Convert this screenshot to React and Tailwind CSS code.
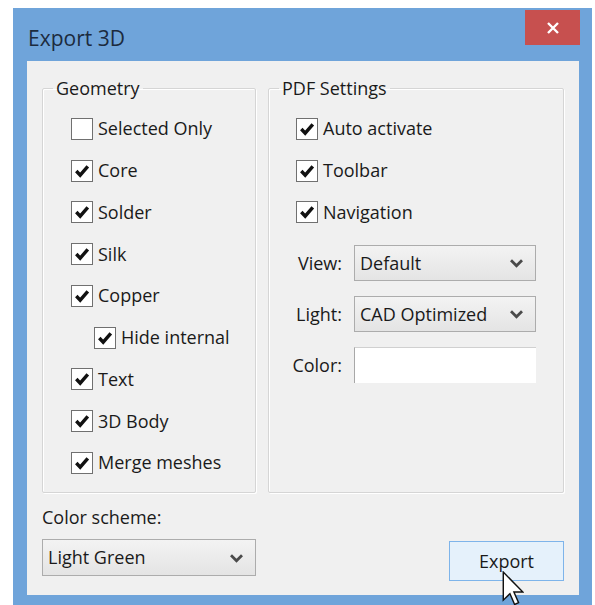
import React from 'react'

const geometry = [
  { label: 'Selected Only', checked: false },
  { label: 'Core', checked: true },
  { label: 'Solder', checked: true },
  { label: 'Silk', checked: true },
  { label: 'Copper', checked: true },
  { label: 'Hide internal', checked: true, nested: true },
  { label: 'Text', checked: true },
  { label: '3D Body', checked: true },
  { label: 'Merge meshes', checked: true },
]

const pdfOptions = ['Auto activate', 'Toolbar', 'Navigation']

function CheckBox({ checked }) {
  return (
    <span className="w-[22px] h-[22px] shrink-0 border-[1.5px] border-[#707070] bg-white flex items-center justify-center">
      {checked && (
        <svg width="16" height="16" viewBox="0 0 16 16">
          <path d="M2.3 8 L6.2 12.2 L13.8 3.3" fill="none" stroke="#111" strokeWidth="3.4" strokeLinejoin="miter" />
        </svg>
      )}
    </span>
  )
}

function CheckRow({ label, checked, nested }) {
  return (
    <div className={`h-[41.75px] flex items-center gap-[5px] ${nested ? 'pl-[23px]' : ''}`}>
      <CheckBox checked={checked} />
      <span>{label}</span>
    </div>
  )
}

function Chevron() {
  return (
    <svg width="15" height="10" viewBox="0 0 15 10" className="shrink-0">
      <path d="M2 2.3 L7.5 7.8 L13 2.3" fill="none" stroke="#4a4a4a" strokeWidth="2.8" />
    </svg>
  )
}

function Dropdown({ value, className }) {
  return (
    <div className={`border border-[#acacac] bg-gradient-to-b from-[#f3f3f3] to-[#e4e4e4] flex items-center pl-[5px] pr-[11px] ${className}`}>
      <span className="flex-1">{value}</span>
      <Chevron />
    </div>
  )
}

function Group({ title, className, children }) {
  return (
    <fieldset className={`border border-[#d5d5d5] shadow-[inset_1px_1px_0_#fff,1px_1px_0_#fff] rounded-[2px] ${className}`}>
      <legend className="ml-[10px] px-[3px] leading-[24px]">{title}</legend>
      {children}
    </fieldset>
  )
}

function FieldRow({ label, children }) {
  return (
    <div className="flex items-center gap-[12px]">
      <span className="w-[73px] text-right">{label}</span>
      {children}
    </div>
  )
}

export default function App() {
  return (
    <div className="relative w-[595px] h-[605px] bg-white pl-[13px] pt-[8px] overflow-hidden font-['Open_Sans',sans-serif] text-[18px] text-[#1a1a1a]">
      <div className="w-[579px] h-[597px] bg-[#6fa4da] flex flex-col">
        {/* title bar */}
        <div className="h-[53px] flex items-start pl-[15px] pr-[12px]">
          <span className="mt-[16px] text-[21px] leading-[28px] text-[#1c2b3e]">Export 3D</span>
          <button className="ml-auto mt-[2px] w-[55px] h-[35px] bg-[#c7504f] flex items-center justify-center">
            <svg width="14" height="14" viewBox="0 0 14 14">
              <path d="M2 2 L12 12 M12 2 L2 12" stroke="#fff" strokeWidth="2.4" />
            </svg>
          </button>
        </div>

        {/* client area */}
        <div className="ml-[14px] w-[552px] h-[534px] bg-[#f0f0f0] px-[15px]">
          <div className="flex gap-[12px] mt-[15px]">
            <Group title="Geometry" className="w-[214px] h-[417px]">
              <div className="pl-[28px] pt-[8px]">
                {geometry.map((g) => (
                  <CheckRow key={g.label} {...g} />
                ))}
              </div>
            </Group>

            <Group title="PDF Settings" className="w-[296px] h-[417px]">
              <div className="pl-[27px] pt-[8px]">
                {pdfOptions.map((o) => (
                  <CheckRow key={o} label={o} checked />
                ))}
              </div>
              <div className="mt-[12px] flex flex-col gap-[15px]">
                <FieldRow label="View:">
                  <Dropdown value="Default" className="w-[182px] h-[36px]" />
                </FieldRow>
                <FieldRow label="Light:">
                  <Dropdown value="CAD Optimized" className="w-[182px] h-[36px]" />
                </FieldRow>
                <FieldRow label="Color:">
                  <div className="w-[182px] h-[36px] bg-white border-l border-t border-l-[#a8a8a8] border-t-[#d0d0d0]" />
                </FieldRow>
              </div>
            </Group>
          </div>

          {/* bottom row */}
          <div className="flex items-start">
            <div className="flex flex-col">
              <span className="mt-[12px] leading-[24px]">Color scheme:</span>
              <Dropdown value="Light Green" className="mt-[10px] w-[214px] h-[37px]" />
            </div>
            <button className="ml-auto mt-[48px] w-[115px] h-[40px] border border-[#7eb4ea] bg-[#e5f1fb] text-[18px] text-[#1a1a1a]">
              Export
            </button>
          </div>
        </div>
      </div>

      {/* mouse pointer */}
      <svg className="absolute left-[502px] top-[571px]" width="22" height="36" viewBox="0 0 12 20">
        <path
          d="M0.6 0.6 L0.6 16.2 L4.3 12.6 L6.9 18.6 L9.1 17.6 L6.5 11.7 L11.5 11.7 Z"
          fill="#fff"
          stroke="#111"
          strokeWidth="0.8"
          strokeLinejoin="miter"
        />
      </svg>
    </div>
  )
}
